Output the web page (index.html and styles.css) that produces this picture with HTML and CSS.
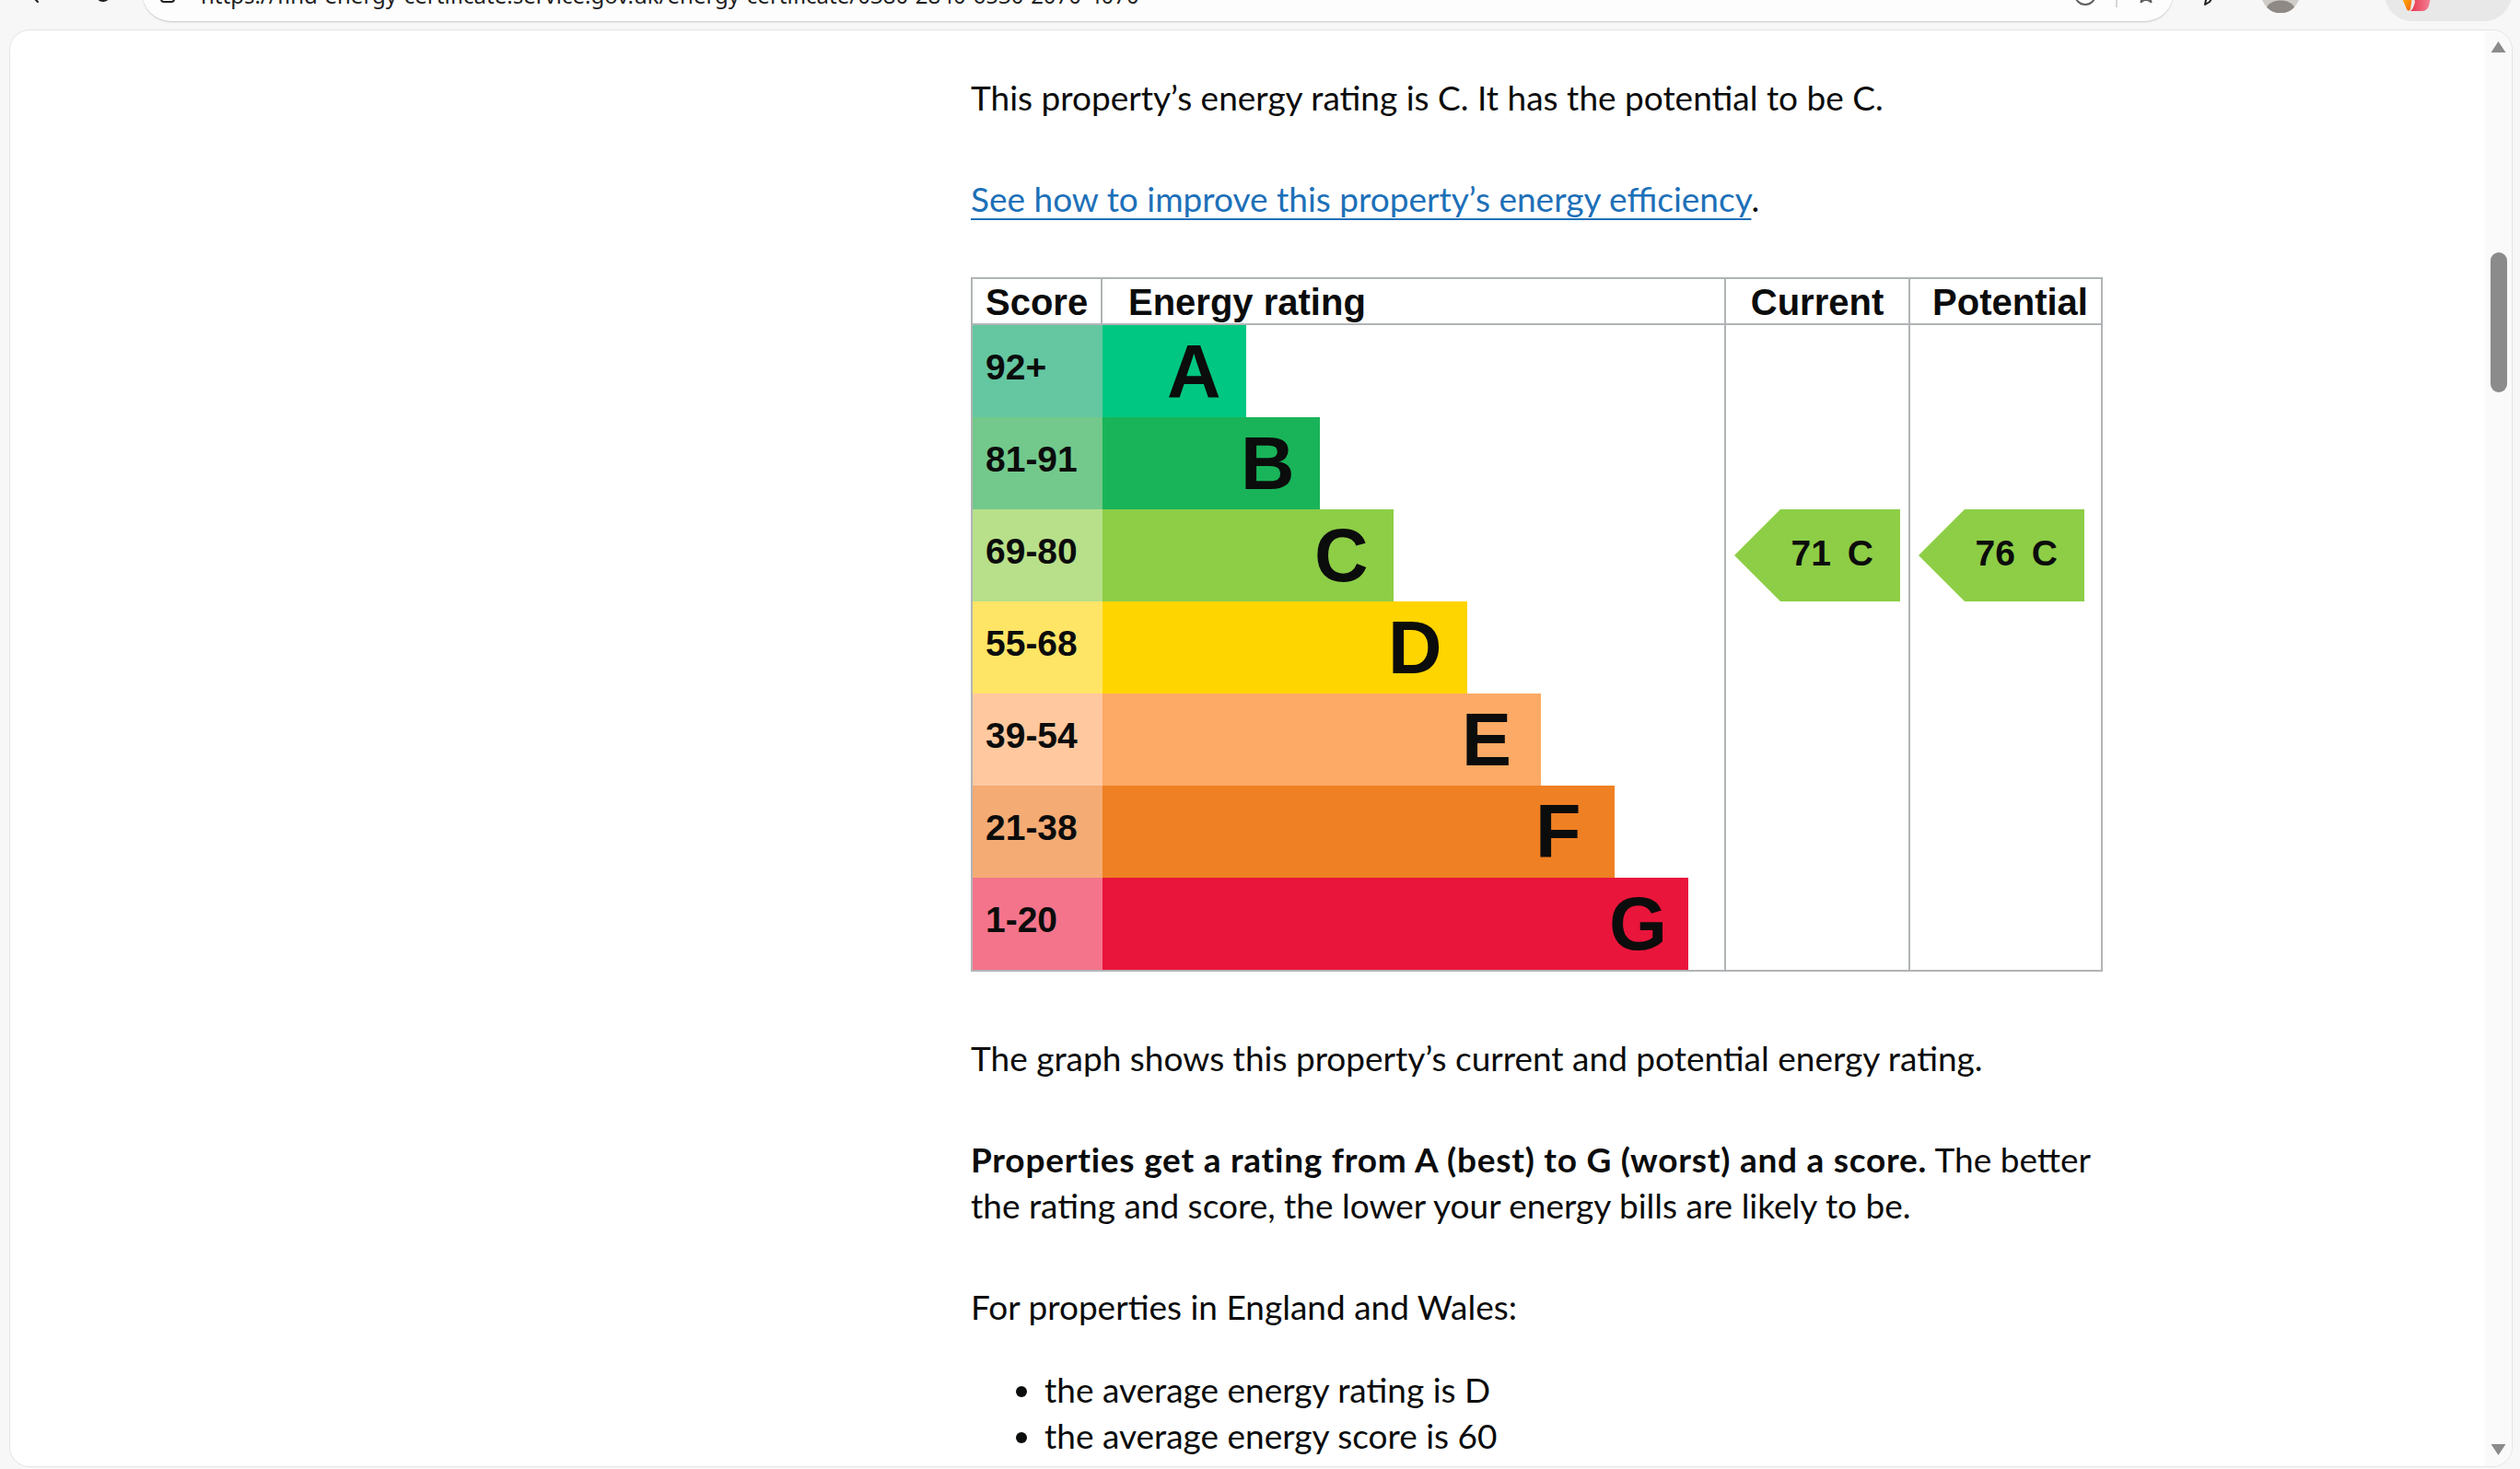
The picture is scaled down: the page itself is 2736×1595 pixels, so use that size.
FILE: index.html
```html
<!DOCTYPE html>
<html lang="en">
<head>
<meta charset="utf-8">
<title>Energy performance certificate</title>
<link rel="stylesheet" href="styles.css">
</head>
<body>
<div class="browser">
  <header class="toolbar">
    <div class="nav">
      <svg class="nav-icon" width="24" height="24" viewBox="0 0 24 24"><path d="M15 4 L7 12 L15 20" fill="none" stroke="#1f1f1f" stroke-width="2" stroke-linecap="round" stroke-linejoin="round"/></svg>
      <svg class="nav-icon" width="24" height="24" viewBox="0 0 24 24"><path d="M19 12 A7 7 0 1 1 16.5 6.7" fill="none" stroke="#1f1f1f" stroke-width="2" stroke-linecap="round"/><path d="M17 3 L17 7.5 L12.5 7.5" fill="none" stroke="#1f1f1f" stroke-width="2" stroke-linecap="round" stroke-linejoin="round"/></svg>
    </div>
    <div class="omnibox">
      <svg class="site-info" width="24" height="24" viewBox="0 0 24 24"><rect x="5" y="4" width="14" height="16" rx="3" fill="none" stroke="#1f1f1f" stroke-width="2"/></svg>
      <span class="url">https://find-energy-certificate.service.gov.uk/energy-certificate/0380-2840-6530-2070-4070</span>
      <div class="omni-actions">
        <svg width="26" height="26" viewBox="0 0 26 26"><circle cx="13" cy="13" r="11" fill="none" stroke="#5f5f5f" stroke-width="2"/></svg>
        <span class="omni-sep"></span>
        <svg width="22" height="22" viewBox="0 0 22 22"><path d="M11 2 L13.6 8 L20 8.6 L15.2 12.8 L16.6 19.4 L11 16 L5.4 19.4 L6.8 12.8 L2 8.6 L8.4 8 Z" fill="none" stroke="#5f5f5f" stroke-width="1.8" stroke-linejoin="round"/></svg>
      </div>
    </div>
    <div class="tb-right">
      <svg class="pen" width="14" height="24" viewBox="0 0 14 24"><path d="M12 2 L3 17 L2 22 L7 19 L12 11" fill="none" stroke="#1f1f1f" stroke-width="2" stroke-linecap="round" stroke-linejoin="round"/></svg>
      <svg class="avatar" width="42" height="42" viewBox="0 0 42 42"><circle cx="21" cy="21" r="21" fill="#cfcbc7"/><path d="M6 36 C10 26 32 26 36 36 A21 21 0 0 1 6 36 Z" fill="#8e8984"/><circle cx="21" cy="17" r="9" fill="#8e8984"/></svg>
      <div class="copilot">
        <svg class="copilot-logo" width="40" height="36" viewBox="0 0 40 36"><defs><linearGradient id="cpA" x1="0" y1="0" x2="1" y2="1"><stop offset="0" stop-color="#ffb900"/><stop offset="1" stop-color="#f7630c"/></linearGradient><linearGradient id="cpB" x1="0" y1="0" x2="1" y2="0"><stop offset="0" stop-color="#e8344e"/><stop offset="1" stop-color="#f58a9b"/></linearGradient></defs><path d="M2 20 L14 20 L12 34 C11 36 9 36 8 34 Z" fill="url(#cpA)"/><path d="M14 14 L36 14 L32 30 C31 34 28 36 24 36 L12 36 C15 34 16 30 17 26 Z" fill="url(#cpB)"/></svg>
      </div>
    </div>
  </header>

  <div class="viewport">
    <main class="page">
      <div class="content">
        <p class="body-text lead">This property’s energy rating is C. It has the potential to be C.</p>
        <p class="body-text link-para"><a class="link" href="#">See how to improve this property’s energy efficiency</a>.</p>

        <div class="epc" role="table" aria-label="Energy rating graph">
          <div class="th th-score">Score</div>
          <div class="th th-rating">Energy rating</div>
          <div class="th th-current">Current</div>
          <div class="th th-potential">Potential</div>

          <div class="band band-a"><div class="score">92+</div><div class="track"><div class="bar" style="width:156px"><span class="letter">A</span></div></div></div>
          <div class="band band-b"><div class="score">81-91</div><div class="track"><div class="bar" style="width:236px"><span class="letter">B</span></div></div></div>
          <div class="band band-c"><div class="score">69-80</div><div class="track"><div class="bar" style="width:316px"><span class="letter">C</span></div></div></div>
          <div class="band band-d"><div class="score">55-68</div><div class="track"><div class="bar" style="width:396px"><span class="letter">D</span></div></div></div>
          <div class="band band-e"><div class="score">39-54</div><div class="track"><div class="bar" style="width:476px"><span class="letter">E</span></div></div></div>
          <div class="band band-f"><div class="score">21-38</div><div class="track"><div class="bar" style="width:556px"><span class="letter">F</span></div></div></div>
          <div class="band band-g"><div class="score">1-20</div><div class="track"><div class="bar" style="width:636px"><span class="letter">G</span></div></div></div>

          <div class="rating-col col-current">
            <div class="arrow arrow-c" style="grid-row:3"><span class="arrow-num">71</span><span class="arrow-letter">C</span></div>
          </div>
          <div class="rating-col col-potential">
            <div class="arrow arrow-c" style="grid-row:3"><span class="arrow-num">76</span><span class="arrow-letter">C</span></div>
          </div>
        </div>

        <p class="body-text after-graph">The graph shows this property’s current and potential energy rating.</p>
        <p class="body-text"><strong class="bold">Properties get a rating from A (best) to G (worst) and a score.</strong> The better the rating and score, the lower your energy bills are likely to be.</p>
        <p class="body-text list-intro">For properties in England and Wales:</p>
        <ul class="bullets">
          <li>the average energy rating is D</li>
          <li>the average energy score is 60</li>
        </ul>
      </div>
    </main>
    <div class="scrollbar">
      <span class="sb-up"></span>
      <div class="sb-track"><span class="sb-thumb"></span></div>
      <span class="sb-down"></span>
    </div>
  </div>
</div>
</body>
</html>
```

FILE: styles.css
```css
html, body {
  margin: 0;
  padding: 0;
}
body {
  width: 2736px;
  height: 1595px;
  overflow: hidden;
  background: #f7f7f7;
  font-family: Lato, "Liberation Sans", sans-serif;
  color: #0b0c0c;
}

/* ---------- browser toolbar (cut off at top) ---------- */
.toolbar {
  height: 32px;
  display: flex;
  align-items: flex-start;
  overflow: hidden;
}
.nav {
  width: 154px;
  box-sizing: border-box;
  padding-left: 26px;
  display: flex;
  gap: 50px;
  margin-top: -18px;
  flex: none;
}
.omnibox {
  flex: none;
  width: 2206px;
  height: 64px;
  margin-top: -41px;
  box-sizing: border-box;
  padding: 6px 19px 0 16px;
  border-radius: 32px;
  background: #fdfdfd;
  box-shadow: 0 1px 0 #d0d0d0, 0 2px 2px rgba(0, 0, 0, 0.06);
  display: flex;
  align-items: center;
}
.site-info { flex: none; }
.url {
  flex: 1;
  margin-left: 24px;
  font-family: "Noto Sans", "Liberation Sans", sans-serif;
  font-size: 24px;
  color: #1f1f1f;
  white-space: nowrap;
  overflow: hidden;
}
.omni-actions {
  display: flex;
  align-items: center;
  gap: 20px;
}
.omni-sep {
  width: 2px;
  height: 28px;
  background: #d6d6d6;
}
.tb-right {
  display: flex;
  align-items: flex-start;
}
.pen {
  margin-left: 32px;
  margin-top: -17px;
}
.avatar {
  margin-left: 49px;
  margin-top: -28px;
}
.copilot {
  margin-left: 92px;
  margin-top: -37px;
  width: 138px;
  height: 60px;
  border-radius: 30px;
  background: #e8e8e8;
  box-sizing: border-box;
  padding-left: 16px;
  display: flex;
  align-items: flex-start;
}
.copilot-logo { margin-top: 13px; }

/* ---------- viewport ---------- */
.viewport {
  margin: 0 8px 0 10px;
  height: 1561px;
  box-sizing: border-box;
  border: 1px solid #e4e4e4;
  border-radius: 22px;
  background: #ffffff;
  display: flex;
  overflow: hidden;
}
.page {
  flex: 1;
  overflow: hidden;
}
.content {
  margin-left: 1043px;
  width: 1250px;
  padding-top: 48px;
}

/* ---------- text ---------- */
.body-text {
  margin: 0 0 60px;
  font-size: 37px;
  line-height: 50px;
}
.lead { margin-bottom: 60px; }
.link-para { margin-bottom: 60px; }
.link {
  color: #1d70b8;
  text-decoration: underline;
  text-decoration-thickness: 2px;
  text-underline-offset: 7px;
}
.bold {
  font-weight: 700;
  letter-spacing: 0.75px;
}
.list-intro { margin-bottom: 40px; }
.bullets {
  margin: 0;
  padding-left: 80px;
  font-size: 37px;
  line-height: 50px;
  list-style: disc;
}

/* ---------- EPC graph ---------- */
.epc {
  display: grid;
  grid-template-columns: 141px 677px 200px 207px;
  grid-template-rows: 50px repeat(7, 100px);
  width: max-content;
  border: 2px solid #b1b4b6;
  font-family: "Liberation Sans", Arial, sans-serif;
  font-weight: 700;
  color: #0b0c0c;
  margin-bottom: 69px;
}
.th {
  box-sizing: border-box;
  border-bottom: 2px solid #b1b4b6;
  font-size: 40px;
  line-height: 48px;
  padding-top: 1px;
  white-space: nowrap;
}
.th-score {
  border-right: 2px solid #b1b4b6;
  padding-left: 14px;
}
.th-rating {
  border-right: 2px solid #b1b4b6;
  padding-left: 28px;
}
.th-current {
  border-right: 2px solid #b1b4b6;
  text-align: center;
}
.th-potential {
  text-align: center;
  padding-left: 10px;
}

.band {
  grid-column: 1 / 3;
  display: grid;
  grid-template-columns: 141px 1fr;
  border-right: 2px solid #b1b4b6;
}
.score {
  font-size: 39px;
  line-height: 92px;
  padding-left: 14px;
}
.track { height: 100px; }
.bar {
  height: 100px;
  display: flex;
  justify-content: flex-end;
  font-size: 81px;
  line-height: 100px;
}
.letter {
  width: 86px;
  text-align: left;
}
.band-a .score { background: #64c7a1; }
.band-a .bar { background: #00c781; }
.band-b .score { background: #72c98b; }
.band-b .bar { background: #19b459; }
.band-c .score { background: #b8e08a; }
.band-c .bar { background: #8dce46; }
.band-d .score { background: #ffe566; }
.band-d .bar { background: #ffd500; }
.band-e .score { background: #ffc89e; }
.band-e .bar { background: #fcaa65; }
.band-f .score { background: #f4ab74; }
.band-f .bar { background: #ef8023; }
.band-g .score { background: #f4748b; }
.band-g .bar { background: #e9153b; }

.rating-col {
  grid-row: 2 / 9;
  display: grid;
  grid-template-rows: repeat(7, 100px);
}
.col-current {
  grid-column: 3;
  border-right: 2px solid #b1b4b6;
}
.col-potential { grid-column: 4; }

.arrow {
  width: 180px;
  height: 100px;
  margin-left: 9px;
  box-sizing: border-box;
  padding: 0 29px 5px 0;
  display: flex;
  justify-content: flex-end;
  align-items: center;
  gap: 18px;
  font-size: 39px;
  line-height: 92px;
  clip-path: polygon(50px 0, 100% 0, 100% 100%, 50px 100%, 0 50%);
}
.arrow-c { background: #8dce46; }

/* ---------- scrollbar ---------- */
.scrollbar {
  width: 29px;
  flex: none;
  background: #fafafa;
  display: flex;
  flex-direction: column;
  align-items: center;
}
.sb-up, .sb-down {
  width: 16px;
  height: 12px;
  background: #8b8b8b;
  flex: none;
}
.sb-up {
  margin-top: 12px;
  clip-path: polygon(50% 0, 100% 100%, 0 100%);
}
.sb-down {
  margin-bottom: 12px;
  clip-path: polygon(0 0, 100% 0, 50% 100%);
}
.sb-track {
  flex: 1;
  width: 100%;
  display: flex;
  flex-direction: column;
  align-items: center;
}
.sb-thumb {
  margin-top: 217px;
  width: 18px;
  height: 152px;
  border-radius: 9px;
  background: #8b8b8b;
}
```
